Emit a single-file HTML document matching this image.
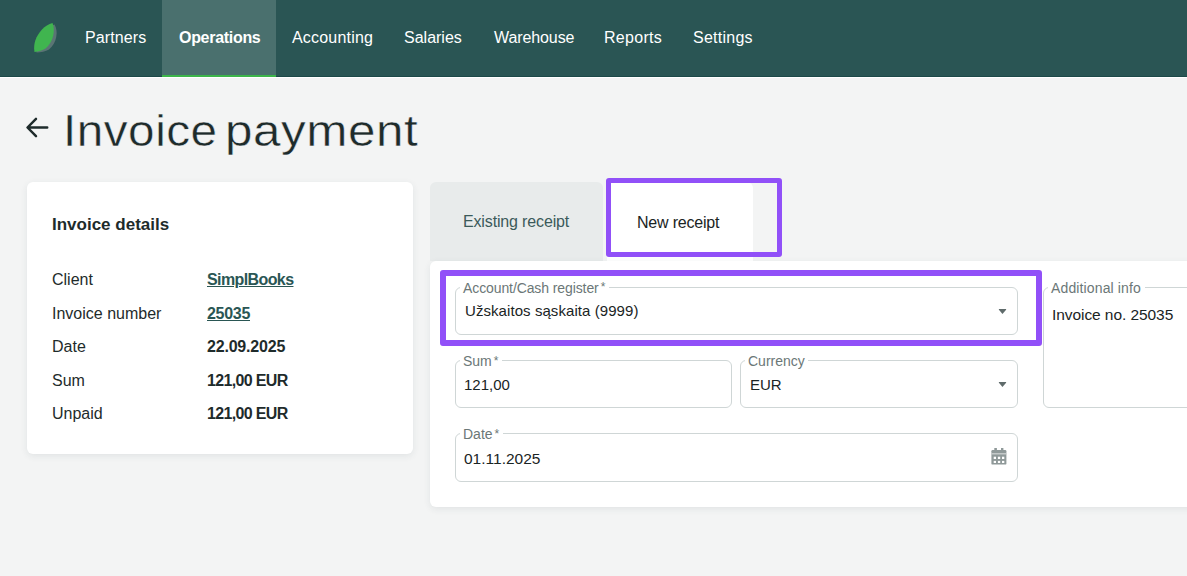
<!DOCTYPE html>
<html><head><meta charset="utf-8">
<style>
*{box-sizing:border-box;margin:0;padding:0}
html,body{width:1187px;height:576px;overflow:hidden;background:#f3f4f4;font-family:"Liberation Sans",sans-serif;position:relative}
.a{position:absolute;white-space:nowrap}
#nav{position:absolute;left:0;top:0;width:1187px;height:77px;background:#2a5554;border-bottom:1px solid #1c4948}
#navline{position:absolute;left:0;top:77px;width:1187px;height:1px;background:#ffffff}
.ni{position:absolute;top:0;height:76px;color:#fff;font-size:16px;line-height:76px}
#act{position:absolute;left:162px;top:0;width:114px;height:77px;background:#4a706e;border-bottom:2px solid #3cb54a}
#title,#title2{position:absolute;left:63px;top:106px;font-size:44.5px;line-height:50px;color:#1e2b2b;transform-origin:0 0;transform:scaleX(1.07);letter-spacing:0.5px;-webkit-text-stroke:0.45px #f3f4f4}
#title2{left:225px;transform:scaleX(1.11)}
.card{position:absolute;background:#fff;border-radius:6px;box-shadow:0 2px 7px rgba(40,70,80,0.09)}
.lbl{position:absolute;font-size:16px;color:#1e2b2b;line-height:20px}
.val{position:absolute;font-size:16px;font-weight:bold;color:#1e2b2b;line-height:20px}
.lnk{color:#2a5654;text-decoration:underline;text-underline-offset:1px}
.fld{position:absolute;border:1px solid #cfd6d6;border-radius:6px}
.fl{position:absolute;font-size:14px;color:#6b7777;line-height:16px;background:#fff;padding:0 3px}
.ast{font-size:12px;margin-left:2px;position:relative;top:-1.5px;margin-right:1px}
.fv{position:absolute;font-size:15px;color:#1a2424;line-height:18px}
.arr{position:absolute;width:0;height:0;border-left:4.5px solid transparent;border-right:4.5px solid transparent;border-top:5px solid #5f6b6b}
.pbox{position:absolute;border:5px solid #9150f8;border-radius:3px}
</style></head><body>
<div id="nav"></div>
<div id="navline"></div>
<div id="act"></div>
<svg class="a" style="left:30px;top:20px" width="30" height="36" viewBox="0 0 30 36">
  <path d="M24.5 4.5 C28.5 11 27 23 19 29.5 C15.5 31.5 11 32.5 6.5 32.5 C5.5 25 8.5 17 14.5 10.5 C17.5 7.5 20.5 5.5 24.5 4.5Z" fill="#5a7474"/>
  <path d="M22.5 3 C25.5 10 23.5 22 15.5 28.5 C12.5 30.5 8.5 31.5 4.5 32 C3 24 6 16 12 9.5 C15 6.5 18.5 4 22.5 3Z" fill="#40b54f"/>
</svg>
<div class="ni" style="left:85px;letter-spacing:0.1px">Partners</div>
<div class="ni" style="left:179px;font-weight:bold;letter-spacing:-0.3px">Operations</div>
<div class="ni" style="left:292px;letter-spacing:0.2px">Accounting</div>
<div class="ni" style="left:404px">Salaries</div>
<div class="ni" style="left:494px;letter-spacing:-0.1px">Warehouse</div>
<div class="ni" style="left:604px;letter-spacing:0.3px">Reports</div>
<div class="ni" style="left:693px;letter-spacing:0.25px">Settings</div>

<svg class="a" style="left:24px;top:115px" width="28" height="26" viewBox="0 0 28 26">
  <path d="M23.2 12.5 H4 M12 3.8 L3.5 12.5 L12 21.2" stroke="#1e2b2b" stroke-width="2.5" fill="none" stroke-linecap="round" stroke-linejoin="round"/>
</svg>
<div id="title" class="a">Invoice</div><div id="title2" class="a">payment</div>

<div class="card" style="left:27px;top:182px;width:386px;height:272px"></div>
<div class="a" style="left:52px;top:214px;font-size:17px;font-weight:bold;color:#1e2b2b;line-height:22px">Invoice details</div>
<div class="lbl a" style="left:52px;top:270px">Client</div>
<div class="lbl a" style="left:52px;top:304px">Invoice number</div>
<div class="lbl a" style="left:52px;top:337px">Date</div>
<div class="lbl a" style="left:52px;top:371px">Sum</div>
<div class="lbl a" style="left:52px;top:404px">Unpaid</div>
<div class="val a lnk" style="left:207px;top:270px;letter-spacing:-0.6px">SimplBooks</div>
<div class="val a lnk" style="left:207px;top:304px;letter-spacing:-0.3px">25035</div>
<div class="val a" style="left:207px;top:337px;letter-spacing:-0.2px">22.09.2025</div>
<div class="val a" style="left:207px;top:371px;letter-spacing:-0.65px">121,00 EUR</div>
<div class="val a" style="left:207px;top:404px;letter-spacing:-0.65px">121,00 EUR</div>

<!-- tabs -->
<div class="a" style="left:430px;top:182px;width:173px;height:79px;background:#e8ebeb;border-radius:6px 6px 0 0"></div>
<div class="a" style="left:463px;top:212px;letter-spacing:-0.15px;font-size:16px;color:#3b5a5a;line-height:20px">Existing receipt</div>
<div class="a" style="left:607px;top:182px;width:146px;height:80px;background:#fff;border-radius:6px 6px 0 0"></div>
<div class="a" style="left:637px;top:212.5px;letter-spacing:-0.2px;font-size:16px;color:#1a2424;line-height:20px">New receipt</div>

<div class="card" style="left:430px;top:261px;width:800px;height:246px"></div>

<!-- fields -->
<div class="fld" style="left:455px;top:287px;width:563px;height:48px"></div>
<div class="fl a" style="left:460px;top:279.5px;letter-spacing:-0.1px">Account/Cash register<span class="ast">*</span></div>
<div class="fv a" style="left:465px;top:302px;letter-spacing:0.07px">Užskaitos sąskaita (9999)</div>
<svg class="a" style="left:998px;top:308px" width="10" height="8" viewBox="0 0 10 8"><path d="M0.9 1 H8.1 V1.8 L4.5 5.9 L0.9 1.8Z" fill="#5f6b6b"/></svg>

<div class="fld" style="left:1043px;top:287px;width:200px;height:121px"></div>
<div class="fl a" style="left:1048px;top:280px;letter-spacing:0.13px;padding-right:4px">Additional info</div>
<div class="fv a" style="left:1052px;top:306px;font-size:15.5px;letter-spacing:-0.07px">Invoice no. 25035</div>

<div class="fld" style="left:455px;top:360px;width:277px;height:48px"></div>
<div class="fl a" style="left:460px;top:353px">Sum<span class="ast">*</span></div>
<div class="fv a" style="left:464px;top:376px">121,00</div>

<div class="fld" style="left:740px;top:360px;width:278px;height:48px"></div>
<div class="fl a" style="left:745px;top:353px">Currency</div>
<div class="fv a" style="left:750px;top:376px">EUR</div>
<svg class="a" style="left:998px;top:381px" width="10" height="8" viewBox="0 0 10 8"><path d="M0.9 1 H8.1 V1.8 L4.5 5.9 L0.9 1.8Z" fill="#5f6b6b"/></svg>

<div class="fld" style="left:455px;top:433px;width:563px;height:49px"></div>
<div class="fl a" style="left:460px;top:426px">Date<span class="ast">*</span></div>
<div class="fv a" style="left:464px;top:450px;font-size:15.5px">01.11.2025</div>
<svg class="a" style="left:991px;top:447px" width="16" height="19" viewBox="0 0 16 19">
  <rect x="3.3" y="1" width="2.6" height="3" fill="#8f9999"/>
  <rect x="10" y="1" width="2.4" height="3" fill="#8f9999"/>
  <rect x="0.4" y="3" width="15" height="14.6" rx="1.2" fill="#8f9999"/>
  <rect x="0.4" y="6.2" width="15" height="1.2" fill="#d0d4d4"/>
  <rect x="2.7" y="9.7" width="2.3" height="2.3" fill="#fff"/>
  <rect x="6.9" y="9.7" width="2.3" height="2.3" fill="#fff"/>
  <rect x="11" y="9.7" width="2.3" height="2.3" fill="#fff"/>
  <rect x="2.7" y="13.9" width="2.3" height="2.1" fill="#fff"/>
  <rect x="6.9" y="13.9" width="2.3" height="2.1" fill="#fff"/>
  <rect x="11" y="13.9" width="2.3" height="2.1" fill="#fff"/>
</svg>

<!-- purple highlight boxes -->
<div class="pbox" style="left:606px;top:178px;width:176px;height:79px"></div>
<div class="pbox" style="left:440px;top:270px;width:602px;height:76px;border-width:6px 6px 6px 6px"></div>
</body></html>
